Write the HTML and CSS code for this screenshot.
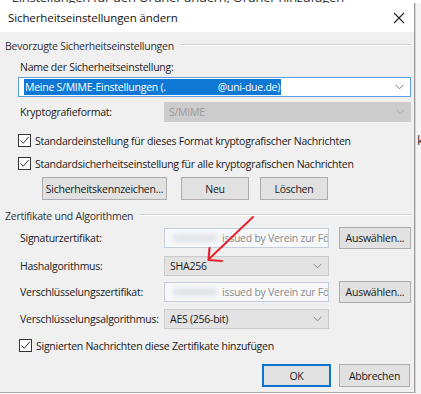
FILE: index.html
```html
<!DOCTYPE html>
<html>
<head>
  <title>Sicherheitseinstellungen ändern</title>
  <link rel="stylesheet" href="styles.css">
</head>
<body>
  <div class="behind">
    <div class="behind-text">• Einstellungen für den Ordner ändern, Ordner hinzufügen</div>
  </div>
  <div class="screen">
    <div class="dialog">
      <div class="titlebar">
        <span class="title">Sicherheitseinstellungen ändern</span>
        <svg class="close" width="12" height="12" viewBox="0 0 12 12">
          <path d="M1 1 L11 11 M11 1 L1 11" stroke="#222" stroke-width="1.1" fill="none"/>
        </svg>
      </div>
      <div class="body">
        <div class="group-head g1"><span>Bevorzugte Sicherheitseinstellungen</span><div class="rule"></div></div>

        <div class="label-line name-label">Name der Sicherheitseinstellung:</div>
        <div class="combo focused">
          <span class="selected">Meine S/MIME-Einstellungen (.<span class="blur-blue"></span>@uni-due.de)</span>
          <svg class="chev" width="9" height="6" viewBox="0 0 9 6"><path d="M0.5 0.8 L4.5 4.8 L8.5 0.8" stroke="#777" fill="none"/></svg>
        </div>

        <div class="row krypto">
          <span class="row-label">Kryptografieformat:</span>
          <div class="combo disabled wide">
            <span>S/MIME</span>
            <svg class="chev" width="9" height="6" viewBox="0 0 9 6"><path d="M0.5 0.8 L4.5 4.8 L8.5 0.8" stroke="#aaa" fill="none"/></svg>
          </div>
        </div>

        <div class="check cb1"><span class="box"><svg width="11" height="11" viewBox="0 0 11 11"><path d="M1.5 5.5 L4.2 8.3 L9.8 1.8" stroke="#333" stroke-width="1" fill="none"/></svg></span>Standardeinstellung für dieses Format kryptografischer Nachrichten</div>
        <div class="check cb2"><span class="box"><svg width="11" height="11" viewBox="0 0 11 11"><path d="M1.5 5.5 L4.2 8.3 L9.8 1.8" stroke="#333" stroke-width="1" fill="none"/></svg></span>Standardsicherheitseinstellung für alle kryptografischen Nachrichten</div>

        <div class="btn-row">
          <button class="btn kennz">Sicherheitskennzeichen...</button>
          <button class="btn small">Neu</button>
          <button class="btn small">Löschen</button>
        </div>

        <div class="group-head g2"><span>Zertifikate und Algorithmen</span><div class="rule"></div></div>

        <div class="row cert r1">
          <span class="row-label">Signaturzertifikat:</span>
          <div class="field"><span class="smudge"></span><span class="issued">issued by Verein zur Förderung</span></div>
          <button class="btn choose">Auswählen...</button>
        </div>
        <div class="row cert r2">
          <span class="row-label">Hashalgorithmus:</span>
          <div class="combo plain">
            <span>SHA256</span>
            <svg class="chev" width="9" height="6" viewBox="0 0 9 6"><path d="M0.5 0.8 L4.5 4.8 L8.5 0.8" stroke="#888" fill="none"/></svg>
          </div>
        </div>
        <div class="row cert r3">
          <span class="row-label">Verschlüsselungszertifikat:</span>
          <div class="field"><span class="smudge"></span><span class="issued">issued by Verein zur Förderung</span></div>
          <button class="btn choose">Auswählen...</button>
        </div>
        <div class="row cert r4">
          <span class="row-label">Verschlüsselungsalgorithmus:</span>
          <div class="combo plain">
            <span>AES (256-bit)</span>
            <svg class="chev" width="9" height="6" viewBox="0 0 9 6"><path d="M0.5 0.8 L4.5 4.8 L8.5 0.8" stroke="#888" fill="none"/></svg>
          </div>
        </div>

        <div class="check cb3"><span class="box"><svg width="11" height="11" viewBox="0 0 11 11"><path d="M1.5 5.5 L4.2 8.3 L9.8 1.8" stroke="#333" stroke-width="1" fill="none"/></svg></span>Signierten Nachrichten diese Zertifikate hinzufügen</div>

        <div class="footer">
          <button class="btn ok">OK</button>
          <button class="btn cancel">Abbrechen</button>
        </div>
      </div>
    </div>
    <div class="outside">
      <span class="peek">k</span>
    </div>
  </div>

  <svg class="arrow" width="421" height="394" viewBox="0 0 421 394">
    <path d="M253 217 L209 259" stroke="#e8232f" stroke-width="2" fill="none" stroke-linecap="round"/>
    <path d="M209.5 248 L208.5 260 L222 261" stroke="#e8232f" stroke-width="2.2" fill="none" stroke-linecap="round" stroke-linejoin="round"/>
  </svg>
</body>
</html>
```
FILE: styles.css
```css
body {
  margin: 0;
  background-color: #fff;
  font-family: "Open Sans", "Noto Sans", sans-serif;
  font-size: 10.5px;
  letter-spacing: -0.25px;
  color: #1a1a1a;
  position: relative;
  width: 421px;
  height: 394px;
  overflow: hidden;
}

.behind {
  display: flow-root;
  height: 3px;
  overflow: hidden;
  background-color: #fff;
}

.behind-text {
  margin-top: -12px;
  padding-left: 4px;
  font-size: 13px;
  color: #333;
  white-space: nowrap;
}

.screen {
  display: flex;
  height: 391px;
}

.dialog {
  width: 414px;
  height: 389px;
  border-right: 1px solid #9a9a9a;
  border-bottom: 1px solid #a8a8a8;
  background-color: #f0f0f0;
  display: flex;
  flex-direction: column;
}

.outside {
  flex: 1;
  background-color: #f4f4f4;
  border-left: 1px solid #d6d6d6;
}

.peek {
  display: block;
  margin-top: 128px;
  margin-left: 1px;
  font-size: 13px;
  color: #333;
}

.titlebar {
  height: 29px;
  background-color: #fff;
  display: flex;
  align-items: center;
  justify-content: space-between;
  padding: 0 9px 0 8px;
}

.title {
  font-size: 11.5px;
  letter-spacing: -0.1px;
  color: #111;
}

.body {
  padding: 0 3px 0 5px;
}

.group-head {
  display: flex;
  align-items: center;
  height: 14px;
  color: #333;
}

.group-head .rule {
  flex: 1;
  border-top: 1px solid #d4d4d4;
  border-bottom: 1px solid #fff;
  margin-left: 6px;
  margin-top: -2px;
}

.g1 { margin-top: 7px; }
.g2 { margin-top: 9px; }

.label-line {
  height: 14px;
  line-height: 14px;
  padding-left: 15px;
}

.name-label { margin-top: 7px; }

.combo {
  height: 20px;
  box-sizing: border-box;
  display: flex;
  align-items: center;
  justify-content: space-between;
  padding: 0 6px 0 5px;
  white-space: nowrap;
}

.combo.focused {
  margin-top: 3px;
  margin-left: 13px;
  background-color: #fff;
  border: 1px solid #5b9fe0;
  padding-left: 5px;
}

.selected {
  background-color: #0f78d4;
  color: #fff;
  padding: 1px 1px;
  line-height: 14px;
}

.blur-blue {
  display: inline-block;
  width: 52px;
  height: 10px;
}

.chev {
  flex: none;
}

.row {
  display: flex;
  align-items: center;
  padding-left: 15px;
}

.row-label {
  width: 144px;
  flex: none;
  white-space: nowrap;
}

.krypto {
  height: 21px;
  margin-top: 4px;
}

.combo.disabled {
  background-color: #cccccc;
  color: #9a9a9a;
}

.combo.wide {
  flex: 1;
}

.combo.plain {
  width: 165px;
  background-color: #e3e3e3;
  border: 1px solid #cbcbcb;
}

.check {
  display: flex;
  align-items: center;
  height: 15px;
  padding-left: 13px;
}

.check .box {
  width: 13px;
  height: 13px;
  box-sizing: border-box;
  border: 1px solid #333;
  background-color: #fff;
  margin-right: 4px;
  display: flex;
  align-items: center;
  justify-content: center;
}

.cb1 { margin-top: 11px; }
.cb2 { margin-top: 8px; }
.cb3 { margin-top: 8px; padding-left: 14px; }

.btn {
  font-family: "Open Sans", "Noto Sans", sans-serif;
  font-size: 10.5px;
  letter-spacing: -0.25px;
  color: #1a1a1a;
  background-color: #e1e1e1;
  border: 1px solid #adadad;
  padding: 0;
  height: 23px;
}

.btn-row {
  display: flex;
  margin-top: 6px;
  padding-left: 37px;
}

.kennz { width: 125px; margin-right: 14px; }
.small { width: 68px; margin-right: 11px; }

.cert {
  height: 22px;
}

.r1 { margin-top: 4px; }
.r2 { margin-top: 6px; }
.r3 { margin-top: 4px; }
.r4 { margin-top: 5px; }

.field {
  width: 165px;
  height: 20px;
  box-sizing: border-box;
  border: 1px solid #c3cfdc;
  background-color: #f7f8fa;
  display: flex;
  align-items: center;
  overflow: hidden;
  white-space: nowrap;
  color: #8a8a8a;
}

.smudge {
  display: inline-block;
  flex: none;
  width: 44px;
  height: 8px;
  margin-left: 8px;
  margin-right: 5px;
  background-color: #e2e4e8;
  border-radius: 4px;
  filter: blur(2px);
}

.issued {
  flex: none;
}

.choose {
  width: 72px;
  height: 22px;
  margin-left: 10px;
}

.footer {
  display: flex;
  justify-content: flex-end;
  margin-top: 11px;
}

.ok {
  width: 69px;
  border: 1px solid #0a74d0;
  box-shadow: inset 0 0 0 1px #0a74d0;
  margin-right: 8px;
}

.cancel {
  width: 71px;
  margin-right: 1px;
}

.arrow {
  position: absolute;
  left: 0;
  top: 0;
  pointer-events: none;
}
```
